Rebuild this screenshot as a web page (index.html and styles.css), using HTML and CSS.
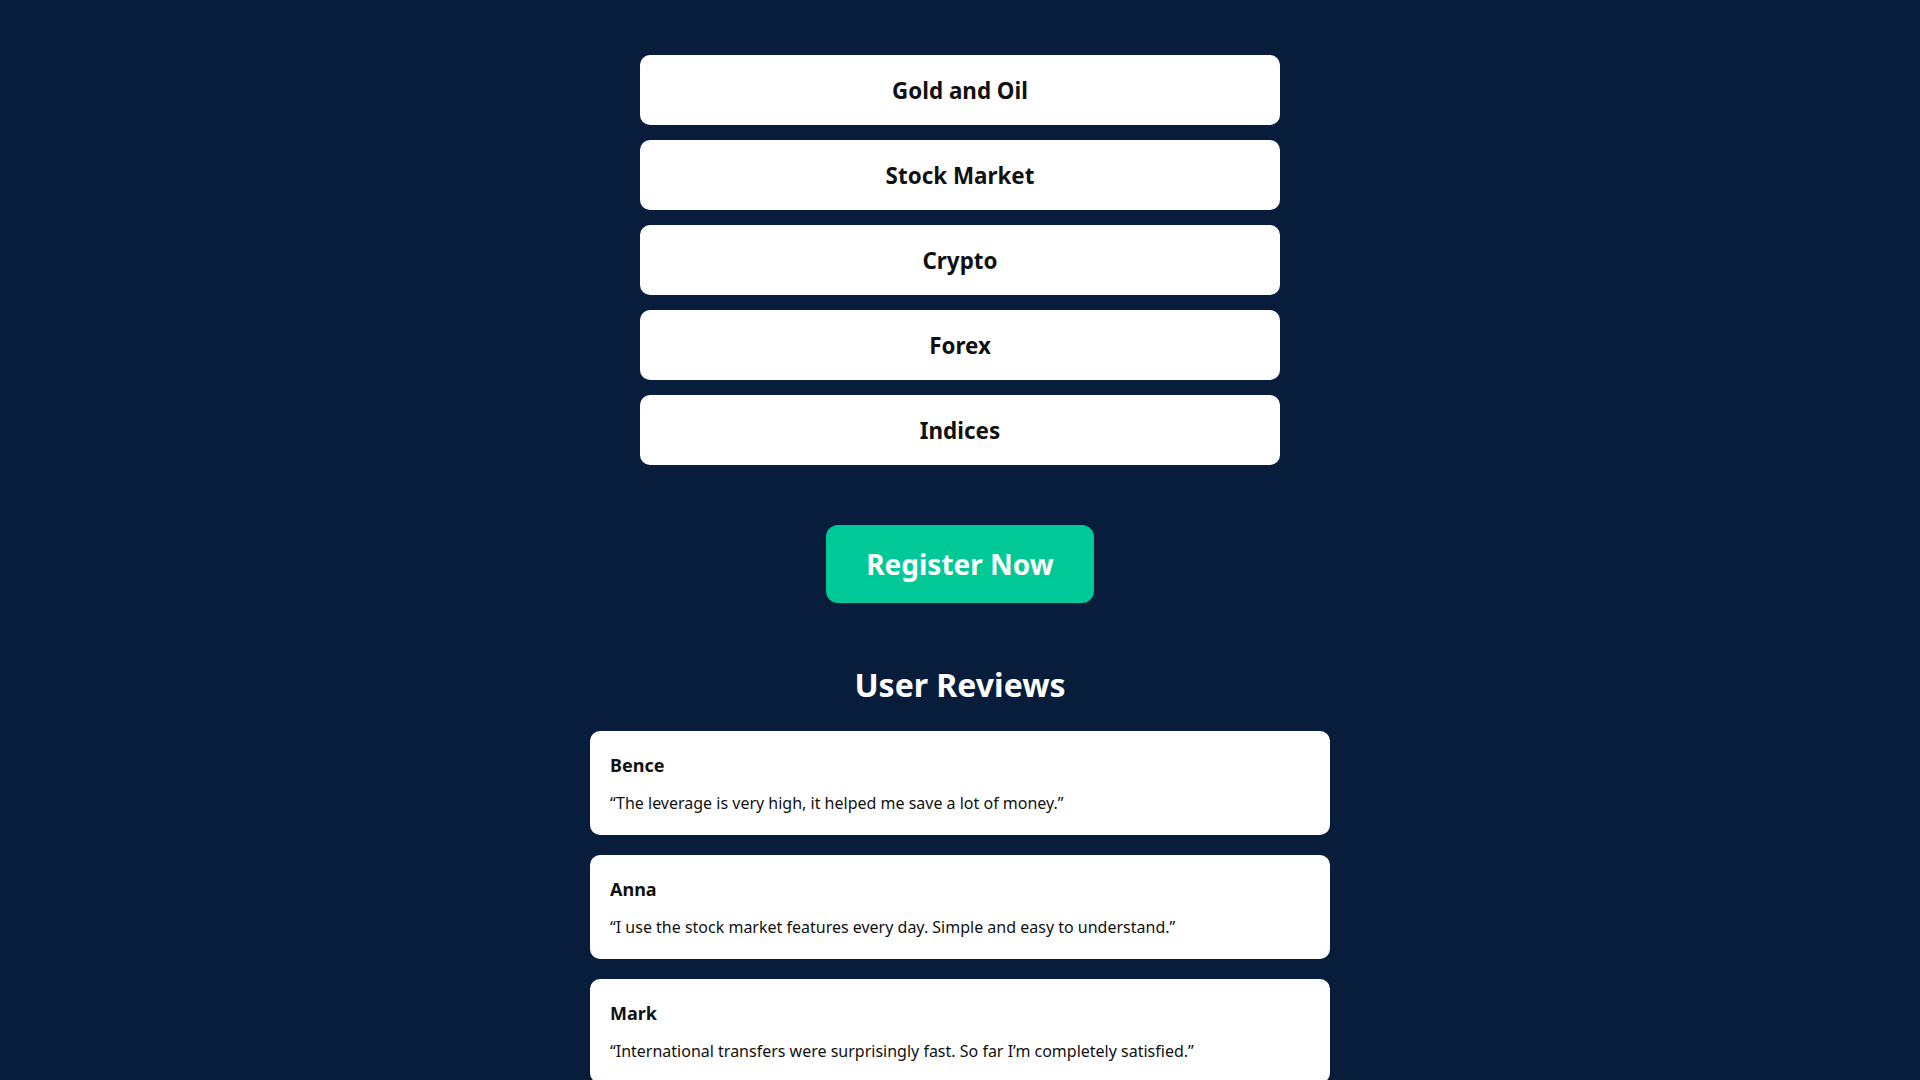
FILE: index.html
```html
<!DOCTYPE html>
<html lang="en">

<head>
  <meta charset="UTF-8">
  <meta name="viewport" content="width=device-width, initial-scale=1.0">
  <title>Trading Platform</title>
  <link rel="stylesheet" href="styles.css">
</head>

<body>
  <main>
    <div class="categories">
      <a class="category-btn" href="#">Gold and Oil</a>
      <a class="category-btn" href="#">Stock Market</a>
      <a class="category-btn" href="#">Crypto</a>
      <a class="category-btn" href="#">Forex</a>
      <a class="category-btn" href="#">Indices</a>
    </div>

    <div class="cta">
      <a class="register-btn" href="#">Register Now</a>
    </div>

    <section class="reviews">
      <h2>User Reviews</h2>
      <div class="review">
        <h3>Bence</h3>
        <p>“The leverage is very high, it helped me save a lot of money.”</p>
      </div>
      <div class="review">
        <h3>Anna</h3>
        <p>“I use the stock market features every day. Simple and easy to understand.”</p>
      </div>
      <div class="review">
        <h3>Mark</h3>
        <p>“International transfers were surprisingly fast. So far I’m completely satisfied.”</p>
      </div>
    </section>
  </main>
</body>
</html>
```

FILE: styles.css
```css
:root {
  --bg-color: #081c3c;
  --accent-color: #00c896;
  --card-color: #fff;
  --text-color: #111;
}

* {
  box-sizing: border-box;
}

body {
  margin: 0;
  font-family: 'Noto Sans', 'Open Sans', sans-serif;
  background-color: var(--bg-color);
  color: var(--text-color);
}

main {
  padding-top: 55px;
}

.categories {
  width: 640px;
  margin: 0 auto;
  display: flex;
  flex-direction: column;
  gap: 15px;
}

.category-btn {
  display: flex;
  align-items: center;
  justify-content: center;
  height: 70px;
  background-color: var(--card-color);
  color: var(--text-color);
  border-radius: 10px;
  font-size: 1.4rem;
  font-weight: bold;
  text-decoration: none;
}

.cta {
  text-align: center;
  margin-top: 60px;
}

.register-btn {
  display: inline-block;
  background-color: var(--accent-color);
  color: #fff;
  font-size: 28px;
  font-weight: bold;
  line-height: 38px;
  padding: 20px 40px;
  border-radius: 12px;
  text-decoration: none;
}

.reviews {
  width: 740px;
  margin: 0 auto;
}

.reviews h2 {
  color: #fff;
  text-align: center;
  font-size: 32px;
  line-height: 44px;
  margin: 60px 0 24px;
}

.review {
  background-color: var(--card-color);
  border-radius: 10px;
  padding: 20px;
  margin-bottom: 20px;
}

.review h3 {
  margin: 0 0 12px;
  font-size: 18px;
  line-height: 28px;
}

.review p {
  margin: 0;
  font-size: 16px;
  line-height: 24px;
}
```
